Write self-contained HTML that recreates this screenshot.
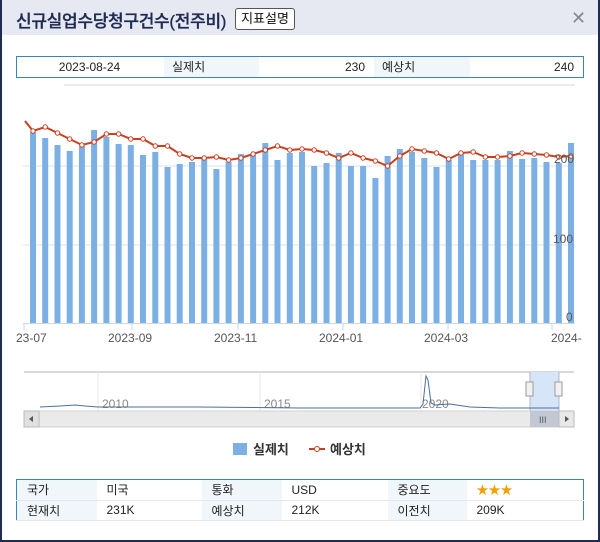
<!DOCTYPE html>
<html><head><meta charset="utf-8"><style>
*{margin:0;padding:0;box-sizing:border-box}
body{width:600px;height:542px;background:#fff;font-family:"Liberation Sans","Noto Sans CJK KR","NanumGothic",sans-serif;position:relative;overflow:hidden}
.frame{position:absolute;left:0;top:0;width:600px;height:542px;border:2px solid #1f2b52;border-top:none}
.hdr{position:absolute;left:0;top:0;width:600px;height:35px;background:#e6e9f2}
.title{position:absolute;left:16px;top:7px;font-size:17px;color:#1f2b52;letter-spacing:-0.3px;font-weight:500;-webkit-text-stroke:0.3px #1f2b52}
.btn{position:absolute;left:235px;top:8px;width:60px;height:22px;border:1px solid #555;border-radius:3px;background:#fff;font-size:13px;text-align:center;line-height:20px;color:#111}
.x{position:absolute;left:571px;top:8px;font-size:18px;color:#888}
.top{position:absolute;left:16px;top:56px;width:568px;height:22px;border:1px solid #3a85b8;font-size:12px;color:#222}
.top div{position:absolute;top:0;height:20px;line-height:20px}
table{position:absolute;left:16px;top:479px;width:568px;height:42px;border:1px solid #3a85b8;border-collapse:collapse;font-size:12px;color:#222}
td{height:20px;padding-left:10px;border-bottom:1px solid #e4e8ee}
td.l{background:#f1f6fa}
</style></head><body>
<div class="hdr"></div>
<div class="title">신규실업수당청구건수(전주비)</div>
<div class="btn">지표설명</div>
<div class="x">✕</div>
<div class="top">
<div style="left:0;width:145px;text-align:center">2023-08-24</div>
<div style="left:147px;width:95px;background:#f1f6fa;padding-left:8px">실제치</div>
<div style="left:242px;width:106px;text-align:right">230</div>
<div style="left:357px;width:96px;background:#f1f6fa;padding-left:8px">예상치</div>
<div style="left:453px;width:104px;text-align:right">240</div>
</div>
<svg id="c" width="600" height="470" style="position:absolute;left:0;top:0"></svg>
<table>
<tr><td class="l" style="width:80px">국가</td><td style="width:105px">미국</td><td class="l" style="width:80px">통화</td><td style="width:106px">USD</td><td class="l" style="width:79px">중요도</td><td style="color:#f0a000;font-size:12px">★★★</td></tr>
<tr><td class="l">현재치</td><td>231K</td><td class="l">예상치</td><td>212K</td><td class="l">이전치</td><td>209K</td></tr>
</table>
<div class="frame"></div>
<script>
var bt=[132,138,145,151,146,130,137,144,145,155,152,167,164,162,159,169,162,154,155,143,160,153,152,166,163,153,166,166,178,156,149,152,158,167,160,153,160,160,160,151,159,158,162,163,143];
var ly=[131,127,133,139,145,142,134,134,139,139,146,146,154,158,158,157,160,158,154,150,146,150,149,150,153,158,153,158,161,166,156,149,151,153,159,153,152,157,157,156,153,154,155,157,156];
var s='';
s+='<line x1="64" y1="85" x2="575" y2="85" stroke="#d8d8d8"/>';
s+='<line x1="23" y1="166" x2="575" y2="166" stroke="#dde3ea"/><line x1="23" y1="245" x2="575" y2="245" stroke="#dde3ea"/>';
var n=bt.length,dx=(568-30)/(n-1),pts='25,121 ';
for(var i=0;i<n;i++){var x=30+i*dx;s+='<rect x="'+x.toFixed(1)+'" y="'+bt[i]+'" width="6" height="'+(323-bt[i])+'" fill="#7cb0e4"/>';pts+=(x+3).toFixed(1)+','+ly[i]+' ';}
s+='<line x1="23" y1="323.5" x2="575" y2="323.5" stroke="#ccd6eb"/>';
s+='<polyline points="'+pts+'" fill="none" stroke="#c8401f" stroke-width="2"/>';
for(var i=0;i<n;i++){var x=30+i*dx+3;s+='<circle cx="'+x.toFixed(1)+'" cy="'+ly[i]+'" r="2.2" fill="#fff" stroke="#c8401f" stroke-width="1"/>';}
[[24,'23-07'],[132,'2023-09'],[238,'2023-11'],[343,'2024-01'],[448,'2024-03'],[552,'2024-']].forEach(function(a){s+='<line x1="'+a[0]+'" y1="323" x2="'+a[0]+'" y2="330" stroke="#ccd6eb"/>';s+='<text x="'+(a[1]=='23-07'?16:a[1]=='2024-'?551:a[0]-24)+'" y="342" font-size="12" fill="#555" font-family="Liberation Sans">'+a[1]+'</text>';});
s+='<text x="554" y="163" font-size="12" fill="#555">200</text><text x="553" y="243" font-size="12" fill="#555">100</text><text x="566" y="321" font-size="12" fill="#555">0</text>';
s+='<line x1="24" y1="372" x2="574" y2="372" stroke="#b0b0b0"/>';
[98,260,421].forEach(function(x){s+='<line x1="'+x+'" y1="372" x2="'+x+'" y2="411" stroke="#eaeaea"/>';});
s+='<rect x="530" y="372" width="29" height="39" fill="#d6e6f8"/><line x1="530" y1="372" x2="530" y2="411" stroke="#b0b8c8"/><line x1="559" y1="372" x2="559" y2="411" stroke="#b0b8c8"/>';
s+='<text x="102" y="408" font-size="12" fill="#888">2010</text><text x="264" y="408" font-size="12" fill="#888">2015</text><text x="422" y="408" font-size="12" fill="#888">2020</text>';
s+='<path d="M40 407 L60 406 L75 405 L85 406 L98 407 L200 407 L300 408 L420 408 L423 404 L426 376 L428 380 L431 403 L435 405 L450 404 L470 407 L500 408 L559 408" fill="none" stroke="#4a6fa0" stroke-width="1"/>';
s+='<rect x="526" y="382" width="7" height="14" fill="#f2f2f2" stroke="#999"/><rect x="555" y="382" width="7" height="14" fill="#f2f2f2" stroke="#999"/>';
s+='<rect x="24" y="411" width="550" height="16" fill="#eaeaea" stroke="#d0d0d0"/>';
s+='<rect x="24" y="411" width="15" height="16" fill="#e0e0e0" stroke="#bbb"/><path d="M33 416 L29 419 L33 422Z" fill="#555"/>';
s+='<rect x="530" y="411" width="29" height="16" fill="#c2c8d2"/><text x="539" y="423" font-size="9" fill="#555">III</text>';
s+='<rect x="559" y="411" width="15" height="16" fill="#e8e8e8" stroke="#bbb"/><path d="M565 416 L569 419 L565 422Z" fill="#555"/>';
s+='<rect x="233" y="443" width="14" height="12" fill="#7cb0e4"/><text x="253" y="454" font-size="13" font-weight="bold" fill="#333" font-family="Liberation Sans,Noto Sans CJK KR,sans-serif">실제치</text>';
s+='<line x1="309" y1="449" x2="325" y2="449" stroke="#c8401f" stroke-width="2"/><circle cx="317" cy="449" r="2.5" fill="#fff" stroke="#c8401f"/><text x="330" y="454" font-size="13" font-weight="bold" fill="#333" font-family="Liberation Sans,Noto Sans CJK KR,sans-serif">예상치</text>';
document.getElementById('c').innerHTML=s;
</script>
</body></html>
